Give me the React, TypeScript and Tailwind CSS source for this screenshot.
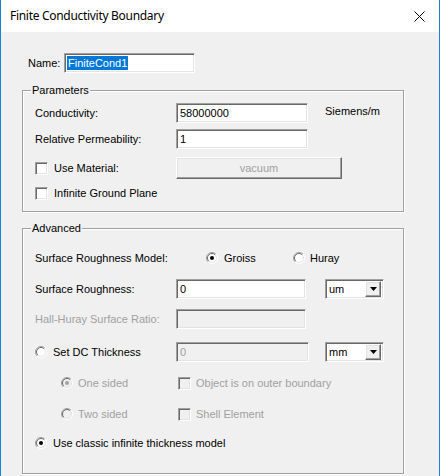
import React from 'react'

const sunken =
  'border border-t-[#a0a0a0] border-l-[#a0a0a0] border-b-white border-r-white shadow-[inset_1px_1px_0_#696969,inset_-1px_-1px_0_#e3e3e3]'
const raised =
  'border border-t-white border-l-white border-b-[#696969] border-r-[#696969] shadow-[inset_-1px_-1px_0_#a0a0a0,inset_1px_1px_0_#e3e3e3]'

function Radio({ checked = false, disabled = false }: { checked?: boolean; disabled?: boolean }) {
  return (
    <svg width="12" height="12" viewBox="0 0 12 12" className="shrink-0">
      <circle cx="6" cy="6" r="5.5" fill={disabled ? '#f0f0f0' : '#ffffff'} />
      <path d="M2.1 9.9 A5.5 5.5 0 0 1 9.9 2.1" fill="none" stroke="#a0a0a0" strokeWidth="1" />
      <path d="M9.9 2.1 A5.5 5.5 0 0 1 2.1 9.9" fill="none" stroke="#ffffff" strokeWidth="1" />
      <path d="M2.8 9.2 A4.5 4.5 0 0 1 9.2 2.8" fill="none" stroke="#696969" strokeWidth="1" />
      <path d="M9.2 2.8 A4.5 4.5 0 0 1 2.8 9.2" fill="none" stroke="#e3e3e3" strokeWidth="1" />
      {checked && <circle cx="6" cy="6" r="2" fill={disabled ? '#a0a0a0' : '#000000'} />}
    </svg>
  )
}

function Check({ disabled = false }: { disabled?: boolean }) {
  return <div className={`w-[13px] h-[13px] shrink-0 ${sunken} ${disabled ? 'bg-[#f0f0f0]' : 'bg-white'}`} />
}

function TextBox({ value, w, disabled = false }: { value?: string; w: string; disabled?: boolean }) {
  return (
    <div
      className={`${w} h-[20px] ${sunken} flex items-center pl-[3px] ${
        disabled ? 'bg-[#f0f0f0] text-[#a0a0a0]' : 'bg-white text-black'
      }`}
    >
      {value}
    </div>
  )
}

function Combo({ value }: { value: string }) {
  return (
    <div className={`w-[59px] h-[20px] ${sunken} bg-white flex items-center justify-between pl-[3px] pr-[2px]`}>
      <span>{value}</span>
      <div className={`w-[16px] h-[16px] bg-[#f0f0f0] ${raised} flex items-center justify-center`}>
        <svg width="7" height="4" viewBox="0 0 7 4">
          <path d="M0 0 H7 L3.5 4 Z" fill="#000" />
        </svg>
      </div>
    </div>
  )
}

function Group({ title, h, children }: { title: string; h: string; children: React.ReactNode }) {
  return (
    <div className={`relative w-[382px] ${h} border border-[#a0a0a0] shadow-[1px_1px_0_#ffffff,inset_1px_1px_0_#ffffff]`}>
      <span className="absolute top-[-8px] left-[8px] px-[1px] bg-[#f0f0f0] leading-[14px]">{title}</span>
      {children}
    </div>
  )
}

export default function App() {
  return (
    <div className="w-[442px] h-[476px] overflow-hidden bg-white font-['Liberation_Sans',Arial,sans-serif] text-[11px] text-black">
      <div className="w-[440px] h-[476px] flex flex-col border-x border-[#1883d7]">
        <div className="h-[32px] shrink-0 bg-white flex items-center justify-between pl-[9px] pr-[9px]">
          <span className="font-['Noto_Sans',sans-serif] text-[12px] tracking-[-0.3px] pb-[1px]">Finite Conductivity Boundary</span>
          <svg width="11" height="11" viewBox="0 0 11 11" className="mr-[5px]">
            <path d="M0.5 0.5 L10.5 10.5 M10.5 0.5 L0.5 10.5" stroke="#000" strokeWidth="1" />
          </svg>
        </div>

        <div className="flex-1 bg-[#f0f0f0] pl-[21px]">
          <div className="mt-[21px] h-[20px] flex items-center">
            <span className="ml-[6px] w-[36px]">Name:</span>
            <div className={`w-[131px] h-[20px] ${sunken} bg-white flex items-center pl-[2px]`}>
              <span className="bg-[#0078d7] text-white leading-[14px] px-[1px]">FiniteCond1</span>
            </div>
          </div>

          <div className="mt-[17px]">
            <Group title="Parameters" h="h-[122px]">
              <div className="pl-[12px] pt-[12px]">
                <div className="h-[20px] flex items-center">
                  <span className="w-[141px]">Conductivity:</span>
                  <TextBox value="58000000" w="w-[132px]" />
                  <span className="ml-[17px] -mt-[3px]">Siemens/m</span>
                </div>
                <div className="mt-[6px] h-[20px] flex items-center">
                  <span className="w-[141px]">Relative Permeability:</span>
                  <TextBox value="1" w="w-[132px]" />
                </div>
                <div className="mt-[8px] h-[22px] flex items-center">
                  <div className="w-[141px] flex items-center gap-[6px]">
                    <Check />
                    <span>Use Material:</span>
                  </div>
                  <div className={`w-[166px] h-[22px] ${raised} flex items-center justify-center text-[#a0a0a0]`}>
                    vacuum
                  </div>
                </div>
                <div className="mt-[4px] h-[20px] flex items-center gap-[6px]">
                  <Check />
                  <span>Infinite Ground Plane</span>
                </div>
              </div>
            </Group>
          </div>

          <div className="mt-[16px]">
            <Group title="Advanced" h="h-[246px]">
              <div className="pl-[12px] pt-[19px]">
                <div className="h-[20px] flex items-center">
                  <span className="w-[171px]">Surface Roughness Model:</span>
                  <div className="w-[87px] flex items-center gap-[6px]">
                    <Radio checked />
                    <span>Groiss</span>
                  </div>
                  <div className="flex items-center gap-[5px]">
                    <Radio />
                    <span>Huray</span>
                  </div>
                </div>
                <div className="mt-[11px] h-[20px] flex items-center">
                  <span className="w-[141px]">Surface Roughness:</span>
                  <TextBox value="0" w="w-[130px]" />
                  <div className="ml-[19px]">
                    <Combo value="um" />
                  </div>
                </div>
                <div className="mt-[10px] h-[20px] flex items-center">
                  <span className="w-[141px] text-[#a0a0a0]">Hall-Huray Surface Ratio:</span>
                  <TextBox w="w-[130px]" disabled />
                </div>
                <div className="mt-[13px] h-[20px] flex items-center">
                  <div className="w-[141px] flex items-center gap-[6px]">
                    <Radio />
                    <span>Set DC Thickness</span>
                  </div>
                  <TextBox value="0" w="w-[133px]" disabled />
                  <div className="ml-[16px]">
                    <Combo value="mm" />
                  </div>
                </div>
                <div className="mt-[11px] h-[20px] flex items-center text-[#a0a0a0]">
                  <div className="w-[143px] pl-[26px] flex items-center gap-[5px]">
                    <Radio checked disabled />
                    <span>One sided</span>
                  </div>
                  <div className="flex items-center gap-[5px]">
                    <Check disabled />
                    <span>Object is on outer boundary</span>
                  </div>
                </div>
                <div className="mt-[11px] h-[20px] flex items-center text-[#a0a0a0]">
                  <div className="w-[143px] pl-[26px] flex items-center gap-[5px]">
                    <Radio disabled />
                    <span>Two sided</span>
                  </div>
                  <div className="flex items-center gap-[5px]">
                    <Check disabled />
                    <span>Shell Element</span>
                  </div>
                </div>
                <div className="mt-[9px] h-[20px] flex items-center gap-[6px]">
                  <Radio checked />
                  <span>Use classic infinite thickness model</span>
                </div>
              </div>
            </Group>
          </div>
        </div>
      </div>
    </div>
  )
}
